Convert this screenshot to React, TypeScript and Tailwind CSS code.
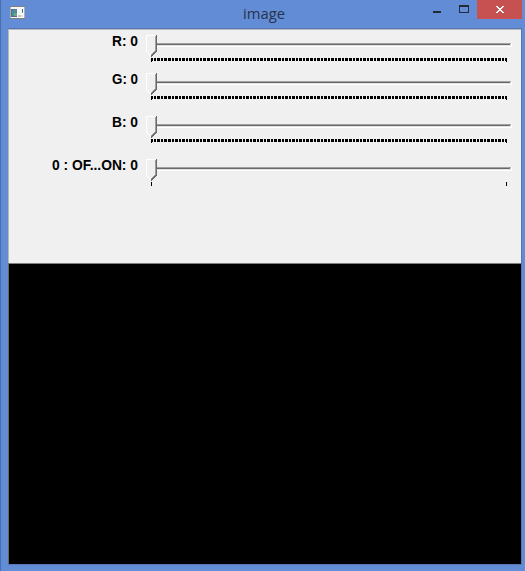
const TICKS_256 = Array.from({ length: 256 }, (_, i) => Math.round((i * 355) / 255));

type SliderProps = { label: string; height: string; labelWidth: number; ticks: number[] };

function Slider({ label, height, labelWidth, ticks }: SliderProps) {
  return (
    <div className={`flex w-full ${height}`}>
      <div className="flex w-[129px] shrink-0 justify-end pt-[3px]">
        <svg width="129" height="18" className="block" role="img" aria-label={label}>
          <text
            x={129 - labelWidth}
            y="13"
            textLength={labelWidth}
            lengthAdjust="spacingAndGlyphs"
            fontSize="14"
            fontWeight="bold"
            fontFamily="'Liberation Sans', Arial, sans-serif"
          >
            {label}
          </text>
        </svg>
      </div>
      <svg width="372" height="33" viewBox="0 0 372 33" className="ml-[8px] block shrink-0" shapeRendering="crispEdges">
        <path d="M10 13H365V14H10Z" fill="#a0a0a0" />
        <path d="M10 14H364V15H10Z" fill="#696969" />
        <path d="M10 15H364V16H10ZM364 14H365V16H364Z" fill="#e3e3e3" />
        <path d="M10 16H366V17H10ZM365 13H366V17H365Z" fill="#fff" />
        <path d="M0 5H10V21L5 27L0 22Z" fill="#f0f0f0" />
        <path d="M0 5H10V6H1V22H0ZM1 22H2V23H1ZM2 23H3V24H2ZM3 24H4V25H3ZM4 25H5V26H4Z" fill="#fff" />
        <path d="M9 6H10V21H9ZM8 21H9V22H8ZM7 22H8V23H7ZM6 23H7V24H6ZM5 24H6V25H5Z" fill="#a0a0a0" />
        <path d="M10 5H11V22H10ZM9 21H10V23H9ZM8 22H9V24H8ZM7 23H8V25H7ZM6 24H7V26H6ZM5 25H6V27H5Z" fill="#696969" />
        {ticks.map((x, i) => (
          <rect key={i} x={5 + x} y="28" width="1" height={i === 0 || i === ticks.length - 1 ? 4 : 3} fill="#000" />
        ))}
      </svg>
    </div>
  );
}

function TitleBar() {
  return (
    <header className="flex h-[28px] w-full shrink-0">
      <div className="w-[160px] pl-[8px] pt-[6px]">
        <svg width="18" height="14" viewBox="0 0 18 14" shapeRendering="crispEdges">
          <path d="M1 0H16V13H1Z" fill="#f8f8f8" />
          <path d="M1 0H16V1H1ZM1 12H16V13H1Z" fill="#827f7a" />
          <path d="M1 1H2V12H1ZM15 1H16V12H15Z" fill="#b3aead" />
          <path d="M3 3H8V10H3Z" fill="#4b8f96" />
          <path d="M2 3H3V11H2ZM3 10H8V11H3Z" fill="#526e86" />
          <path d="M3 3H8V4H3ZM3 4H5V5H3Z" fill="#547ba5" />
          <path d="M5 7H8V10H5Z" fill="#64a783" />
          <path d="M13 3H14V6H13Z" fill="#246c9c" />
          <path d="M13 6H14V7H13Z" fill="#43aa67" />
          <path d="M9 9H12V11H9Z" fill="#c7c8cb" />
          <path d="M12 9H14V11H12Z" fill="#e2e2e2" />
        </svg>
      </div>
      <div className="w-[206px] font-['Open_Sans',sans-serif]">
        <svg width="206" height="28" className="block">
          <text x="82" y="19" textLength="42" lengthAdjust="spacingAndGlyphs" fill="#26334a" fontSize="15">
            image
          </text>
        </svg>
      </div>
      <div className="ml-auto flex">
        <div className="w-[27px] pl-[10px] pt-[11px]">
          <div className="h-[2px] w-[8px] bg-[#232b37]" />
        </div>
        <div className="w-[27px] pl-[9px] pt-[5px]">
          <div className="h-[8px] w-[10px] border border-t-2 border-[#232b37]" />
        </div>
        <div className="h-[19px] w-[45px] bg-[#c75050] pl-[19px] pt-[6px]">
          <svg width="8" height="7" viewBox="0 0 8 7" className="block" shapeRendering="crispEdges">
            <path d="M0 0H2V1H3V2H5V1H6V0H8V1H7V2H6V3H5V4H6V5H7V6H8V7H6V6H5V5H3V6H2V7H0V6H1V5H2V4H3V3H2V2H1V1H0Z" fill="#fff" />
          </svg>
        </div>
        <div className="w-[3px]" />
      </div>
    </header>
  );
}

export default function App() {
  return (
    <div className="flex h-[571px] w-[525px] flex-col overflow-hidden border-l border-[#4a6fae] bg-[#628cd5]">
      <TitleBar />
      <main className="ml-[7px] flex h-[537px] w-[514px] shrink-0 flex-col border-r border-b border-t border-[#5677b2]">
        <section className="h-[234px] shrink-0 border-l border-t border-l-[#b5b8bc] border-t-[#b5b8bc] bg-[#f0f0f0]">
          <Slider label="R: 0" labelWidth={26} height="h-[38px]" ticks={TICKS_256} />
          <Slider label="G: 0" labelWidth={26} height="h-[43px]" ticks={TICKS_256} />
          <Slider label="B: 0" labelWidth={26} height="h-[43px]" ticks={TICKS_256} />
          <Slider label="0 : OF...ON: 0" labelWidth={86} height="h-[43px]" ticks={[0, 355]} />
        </section>
        <section className="flex-1 border-l border-t border-l-[#696969] border-t-[#808080] bg-black" />
      </main>
    </div>
  );
}
